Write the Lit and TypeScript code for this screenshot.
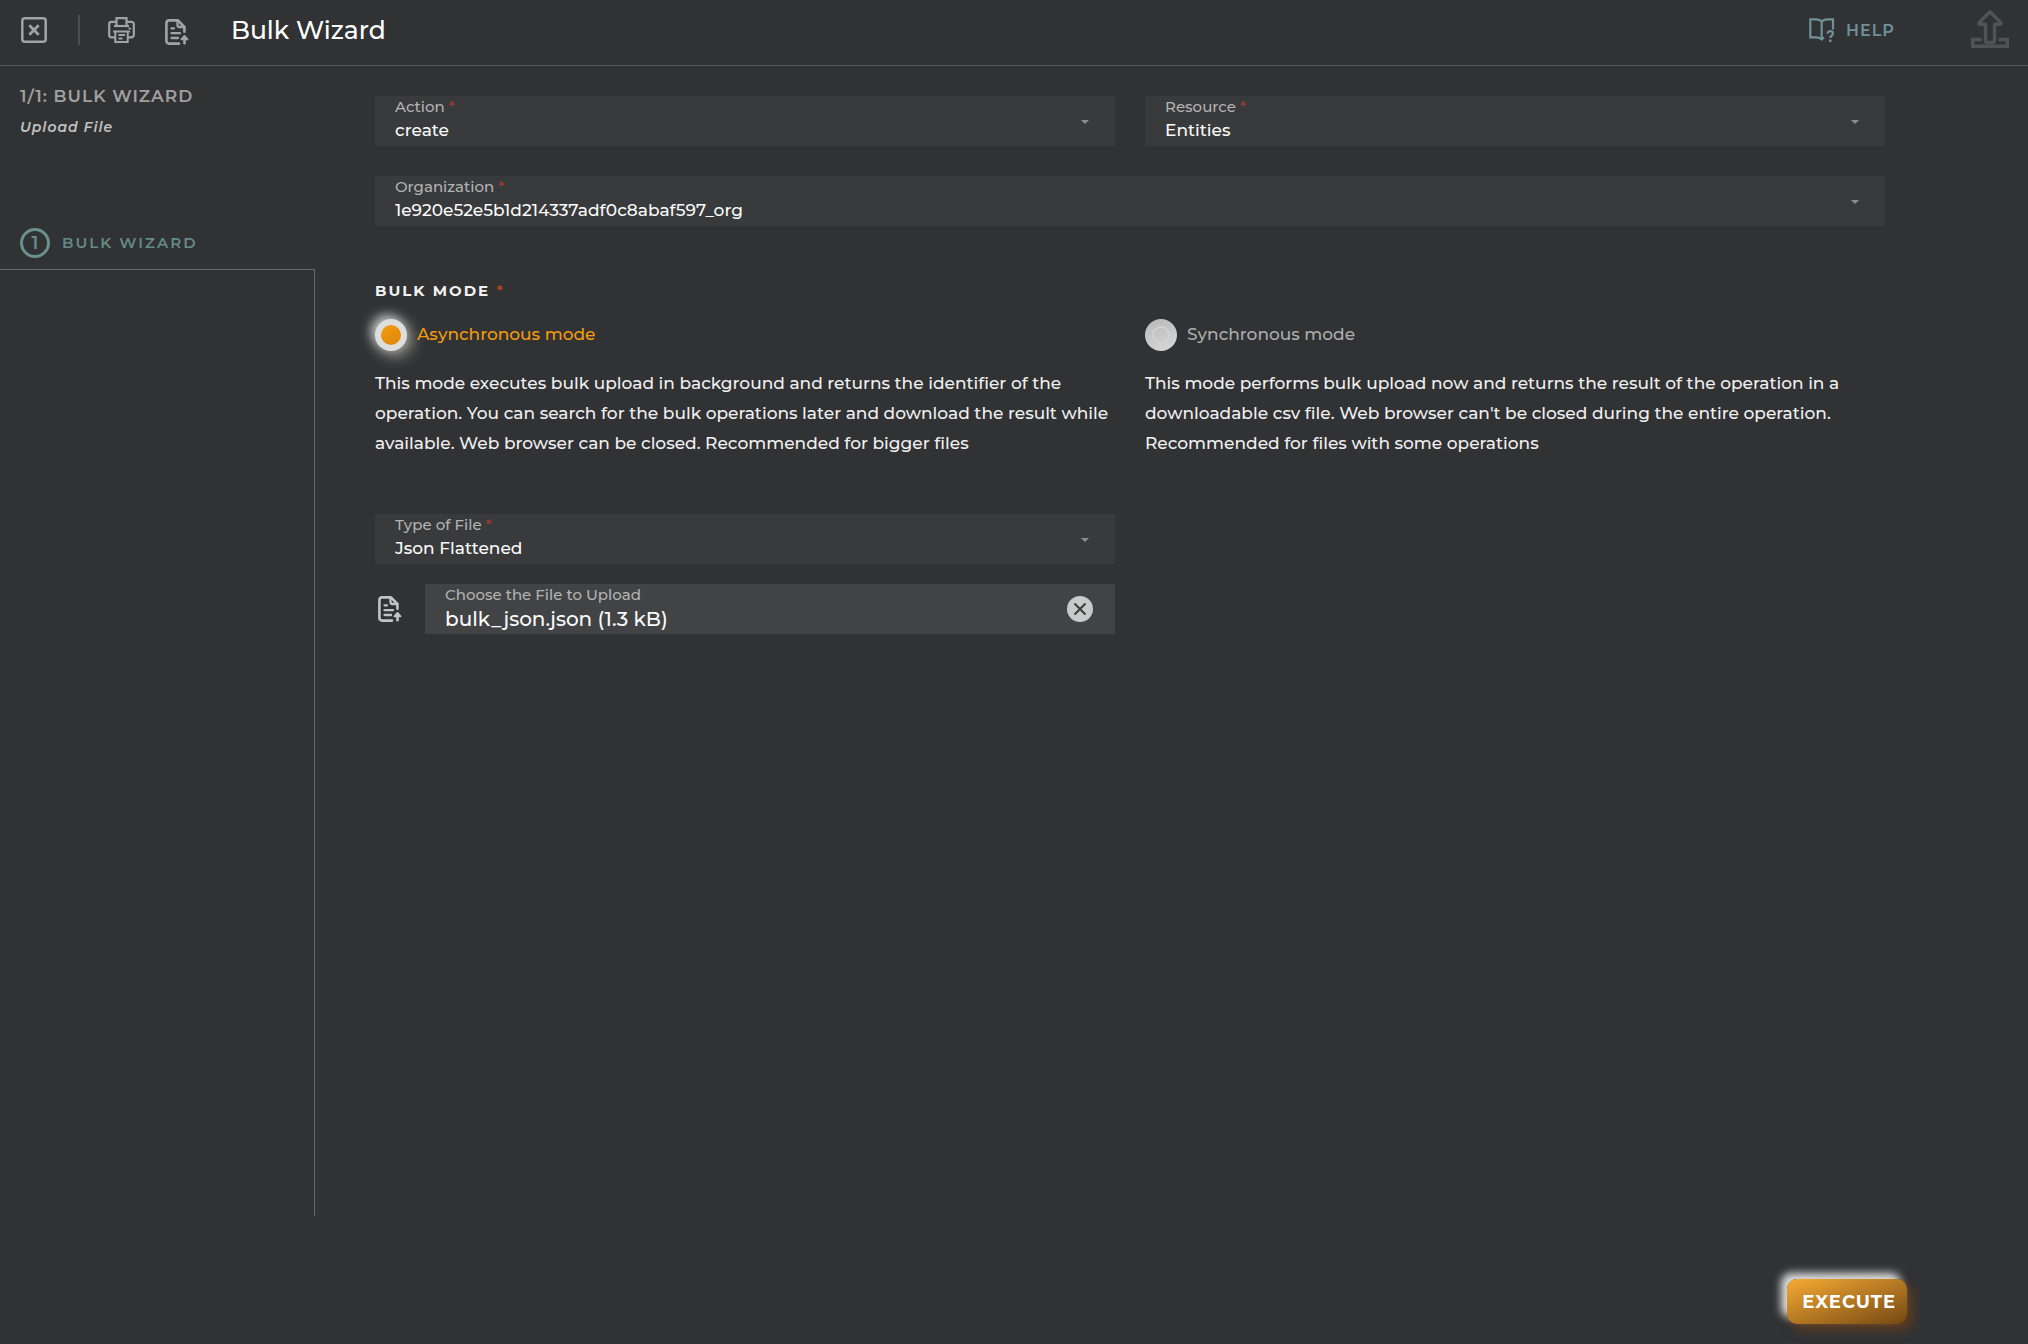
import { LitElement, html, css } from "lit";
import { customElement, property, state } from "lit/decorators.js";

const closeIcon = html`<svg width="26" height="26" viewBox="0 0 26 26" fill="none" stroke="currentColor" stroke-width="2.500" aria-hidden="true">
  <rect x="1.300" y="1.300" width="23.400" height="23.400" rx="2.500"></rect>
  <path d="M8.300 8.300l9.400 9.400M17.700 8.300l-9.400 9.400" stroke-width="2.700"></path>
</svg>`;

const printIcon = html`<svg width="28" height="26" viewBox="0 0 28 26" fill="none" stroke="currentColor" stroke-width="2.200" aria-hidden="true">
  <path d="M8.500 9V1.100h10V9"></path>
  <path d="M6 9h15"></path>
  <path d="M8.500 4.900H3.500a2.300 2.300 0 0 0-2.300 2.300V18a2.300 2.300 0 0 0 2.300 2.300h4M18.500 4.900h5a2.300 2.300 0 0 1 2.300 2.300V18a2.300 2.300 0 0 1-2.300 2.300h-4"></path>
  <path d="M5 14.500h17M7.300 14.500V24.900h12.400V14.500M10.500 18h6.500M10.500 21.500h4" stroke-width="2"></path>
  <path d="M20.500 11.500h2.500" stroke-width="1.800"></path>
</svg>`;

const fileUploadIcon = html`<svg width="24" height="26" viewBox="0 0 24 26" fill="none" stroke="currentColor" stroke-width="2.600" stroke-linecap="round" stroke-linejoin="round" aria-hidden="true">
  <path d="M14 24.600H4.200A2.800 2.800 0 0 1 1.400 22V4A2.800 2.800 0 0 1 4.200 1.400h8.800L19.400 8v4.800"></path>
  <path d="M12.500 1.800V6a2 2 0 0 0 2 2h4.800" stroke-width="2.300"></path>
  <path d="M6.500 9.300h2.500M6.500 14.200h8.500M6.500 19h6.500" stroke-width="2.300"></path>
  <path d="M19.500 24.300v-5"></path>
  <path d="M16.500 20.300l3-3.300 3 3.300z" fill="currentColor" stroke-width="1.900"></path>
</svg>`;

const helpIcon = html`<svg width="26" height="25" viewBox="0 0 26 25" fill="none" stroke="currentColor" stroke-width="2.200" aria-hidden="true">
  <path d="M12.700 21.500V3.600C11.500 2 9.500 1.400 7 1.400H1.300v18h6.200c2.300 0 3.700.6 5.200 2 .8-.8 1.500-1.300 2.500-1.600"></path>
  <path d="M12.700 3.600C14 2 16 1.400 18.500 1.400h5.500v10"></path>
  <path d="M18.600 15.700c.1-1.700 1.200-2.500 2.700-2.500s2.600.9 2.600 2.300c0 2.100-2.600 2.100-2.600 4.600" stroke-width="2.200"></path>
  <path d="M21.300 21.500v2.500" stroke-width="2.400"></path>
</svg>`;

const uploadIcon = html`<svg width="38" height="38" viewBox="0 0 38 38" fill="none" stroke="currentColor" stroke-width="3.400" stroke-linejoin="round" aria-hidden="true">
  <path d="M19 1.800L29.800 12.500q1 1.800-1 1.800H23.500V30.500q0 2-2 2H16.500q-2 0-2-2V14.300H9.200q-2 0-1-1.800z"></path>
  <path d="M10.500 29.500H1.700V36.300H36.300V29.500H27.500" stroke-linejoin="miter"></path>
</svg>`;

const clearIcon = html`<svg width="26" height="26" viewBox="0 0 26 26" aria-hidden="true">
  <circle cx="13" cy="13" r="13" fill="#c8caca"></circle>
  <path d="M7.500 7.500l11 11M18.500 7.500l-11 11" stroke="#3b3c3e" stroke-width="2"></path>
</svg>`;

@customElement("wizard-select")
class WizardSelect extends LitElement {
  @property() label = "";
  @property({ type: Array }) options: string[] = [];

  static styles = css`
    :host {
      display: block;
      min-width: 0;
    }
    .field {
      display: grid;
      height: 50px;
      background: #393a3c;
    }
    .label,
    .select,
    .caret {
      grid-area: 1 / 1;
    }
    .label {
      z-index: 1;
      align-self: start;
      justify-self: start;
      padding: 1px 20px;
      font-size: 15px;
      line-height: 20px;
      color: #b2b3b3;
      pointer-events: none;
    }
    .required {
      color: #b03a34;
      font-weight: 400;
    }
    .select {
      appearance: none;
      box-sizing: border-box;
      width: 100%;
      padding: 18px 50px 0 20px;
      border: 0;
      border-radius: 0;
      background: transparent;
      color: #fafafa;
      font: inherit;
      font-size: 17px;
    }
    .select:focus-visible {
      outline: 1px solid #6f9da0;
    }
    .option {
      background: #393a3c;
    }
    .caret {
      align-self: center;
      justify-self: end;
      margin: 2px 26px 0 0;
      pointer-events: none;
    }
  `;

  render() {
    return html`<div class="field">
      <label class="label" for="control">${this.label} <span class="required">*</span></label>
      <select class="select" id="control" required>
        ${this.options.map((o) => html`<option class="option">${o}</option>`)}
      </select>
      <svg class="caret" width="8" height="4" viewBox="0 0 8 4" aria-hidden="true">
        <path d="M0 0h8L4 4z" fill="#8c8d8d"></path>
      </svg>
    </div>`;
  }
}

interface Mode {
  id: string;
  name: string;
  text: string;
}

const modes: Mode[] = [
  {
    id: "async",
    name: "Asynchronous mode",
    text: "This mode executes bulk upload in background and returns the identifier of the operation. You can search for the bulk operations later and download the result while available. Web browser can be closed. Recommended for bigger files",
  },
  {
    id: "sync",
    name: "Synchronous mode",
    text: "This mode performs bulk upload now and returns the result of the operation in a downloadable csv file. Web browser can't be closed during the entire operation. Recommended for files with some operations",
  },
];

@customElement("app-root")
class AppRoot extends LitElement {
  @state() private mode = "async";
  @state() private file = "bulk_json.json (1.3 kB)";

  static styles = css`
    :host {
      display: flex;
      flex-direction: column;
      min-height: 100vh;
      background: #313234;
      color: #f0f0f0;
      font-family: Montserrat, Inter, "Open Sans", sans-serif;
      font-size: 16px;
      font-weight: 500;
    }
    svg {
      display: block;
    }
    .icon-button {
      display: block;
      padding: 0;
      border: 0;
      background: none;
      color: inherit;
      cursor: pointer;
    }
    .header {
      display: flex;
      align-items: center;
      box-sizing: border-box;
      height: 66px;
      padding: 0 19px 5px 21px;
      border-bottom: 1px solid #595a5c;
      color: #a3a3a3;
    }
    .divider {
      width: 2px;
      height: 30px;
      margin: 0 28px 0 31px;
      background: #4c4d4f;
    }
    .attach {
      margin: 4px 42px 0 29px;
    }
    .title {
      flex: 1;
      margin: 0;
      color: #ffffff;
      font-size: 25px;
      font-weight: 500;
      line-height: 32px;
    }
    .help {
      display: flex;
      align-items: center;
      gap: 11px;
      margin-right: 76px;
      color: #6f9298;
      font-size: 16px;
      font-weight: 600;
      letter-spacing: 1px;
      text-decoration: none;
    }
    .upload {
      margin-bottom: 2px;
      color: #515253;
    }
    .body {
      display: flex;
      flex: 1;
    }
    .sidebar {
      display: flex;
      flex-direction: column;
      flex: none;
      width: 315px;
    }
    .summary {
      box-sizing: border-box;
      height: 142px;
      padding: 20px 20px 0;
    }
    .position {
      margin: 0 0 11px;
      color: #a0a0a0;
      font-size: 17px;
      font-weight: 600;
      line-height: 20px;
      letter-spacing: 1px;
    }
    .stage {
      margin: 0;
      color: #c2c2c2;
      font-size: 14px;
      font-style: italic;
      font-weight: 600;
      line-height: 20px;
      letter-spacing: 1px;
    }
    .step {
      display: flex;
      align-items: center;
      gap: 12px;
      box-sizing: border-box;
      height: 61px;
      padding: 8px 20px 0;
      color: #648a89;
      font-size: 15px;
      font-weight: 600;
      letter-spacing: 2px;
      text-decoration: none;
    }
    .step-number {
      display: grid;
      place-items: center;
      box-sizing: border-box;
      width: 30px;
      height: 30px;
      border: 3px solid #6a908f;
      border-radius: 50%;
      font-size: 18px;
      letter-spacing: 0;
    }
    .rail {
      flex: 1;
      border: solid #666769;
      border-width: 1px 1px 0 0;
    }
    .form {
      display: grid;
      grid-template-columns: 1fr 1fr;
      align-content: start;
      gap: 30px;
      flex: 1;
      padding: 30px 143px 0 60px;
    }
    .wide {
      grid-column: 1 / -1;
    }
    .modes {
      display: grid;
      grid-template-columns: 1fr 1fr;
      column-gap: 30px;
      grid-column: 1 / -1;
      min-width: 0;
      margin: 24px 0 26px;
      padding: 0;
      border: 0;
    }
    .legend {
      margin-bottom: 18px;
      padding: 0;
      color: #f2f2f2;
      font-size: 15px;
      font-weight: 700;
      line-height: 21px;
      letter-spacing: 2px;
    }
    .required {
      color: #d2451e;
      font-weight: 500;
    }
    .choice {
      display: flex;
      align-items: center;
      gap: 10px;
      color: #adaeae;
      font-size: 17px;
      line-height: 30px;
    }
    .choice-name {
      height: 32px;
    }
    .choice.checked {
      color: #f39a11;
    }
    .radio {
      appearance: none;
      display: grid;
      place-items: center;
      flex: none;
      width: 32px;
      height: 32px;
      margin: 0;
      border-radius: 50%;
      background: linear-gradient(160deg, #b8b8b8, #d8d8d8);
    }
    .radio::before {
      content: "";
      box-sizing: border-box;
      width: 18px;
      height: 18px;
      border: 2px solid #d2d2d2;
      border-radius: 50%;
    }
    .radio:checked {
      background: #dedede;
      box-shadow:
        -4px -4px 12px rgba(255, 255, 255, 0.7),
        4px 4px 16px rgba(255, 255, 240, 0.6);
    }
    .radio:checked::before {
      width: 20px;
      height: 20px;
      border: 0;
      background: linear-gradient(150deg, #f59c12, #dc860a);
    }
    .note {
      margin: 17px 0 0;
      color: #f0f0f0;
      font-size: 17px;
      line-height: 30px;
    }
    .file {
      display: flex;
      flex-direction: column;
      gap: 20px;
      min-width: 0;
    }
    .file-row {
      display: flex;
      align-items: center;
    }
    .pick {
      margin: 0 23px 0 3px;
      color: #c2c3c3;
    }
    .file-field {
      display: flex;
      align-items: center;
      flex: 1;
      height: 50px;
      padding: 0 22px 0 20px;
      background: #424345;
    }
    .file-text {
      display: flex;
      flex-direction: column;
      flex: 1;
      height: 48px;
    }
    .file-label {
      color: #b2b3b3;
      font-size: 15px;
      line-height: 20px;
    }
    .file-name {
      padding: 0;
      border: 0;
      outline: 0;
      background: none;
      color: #fafafa;
      font: inherit;
      font-size: 20px;
      line-height: 28px;
    }
    .footer {
      display: flex;
      justify-content: flex-end;
      padding: 63px 121px 20px 0;
    }
    .execute {
      height: 45px;
      padding: 0 11px 0 15px;
      border: 0;
      border-radius: 10px;
      background: linear-gradient(160deg, #f7ab33, #744813);
      box-shadow:
        -6px -6px 8px rgba(255, 255, 255, 0.85),
        6px 6px 12px rgba(140, 70, 10, 0.5);
      color: #ffffff;
      font: inherit;
      font-size: 18px;
      font-weight: 700;
      letter-spacing: 1px;
      cursor: pointer;
    }
  `;

  private renderMode(m: Mode) {
    const checked = this.mode === m.id;
    return html`<div>
      <label class="choice ${checked ? "checked" : ""}">
        <input class="radio" type="radio" name="mode" .checked=${checked} @change=${() => (this.mode = m.id)} />
        <span class="choice-name">${m.name}</span>
      </label>
      <p class="note">${m.text}</p>
    </div>`;
  }

  render() {
    return html`
      <header class="header">
        <button class="icon-button" aria-label="Close">${closeIcon}</button>
        <span class="divider"></span>
        <button class="icon-button" aria-label="Print">${printIcon}</button>
        <button class="icon-button attach" aria-label="Load file">${fileUploadIcon}</button>
        <h1 class="title">Bulk Wizard</h1>
        <a class="help" href="#help">${helpIcon}<span>HELP</span></a>
        <span class="upload">${uploadIcon}</span>
      </header>
      <div class="body">
        <nav class="sidebar">
          <div class="summary">
            <h2 class="position">1/1: BULK WIZARD</h2>
            <p class="stage">Upload File</p>
          </div>
          <a class="step" href="#step-1"><span class="step-number">1</span>BULK WIZARD</a>
          <div class="rail"></div>
        </nav>
        <main class="form">
          <wizard-select label="Action" .options=${["create"]}></wizard-select>
          <wizard-select label="Resource" .options=${["Entities"]}></wizard-select>
          <wizard-select class="wide" label="Organization" .options=${["1e920e52e5b1d214337adf0c8abaf597_org"]}></wizard-select>
          <fieldset class="modes">
            <legend class="legend">BULK MODE <span class="required">*</span></legend>
            ${modes.map((m) => this.renderMode(m))}
          </fieldset>
          <div class="file">
            <wizard-select label="Type of File" .options=${["Json Flattened"]}></wizard-select>
            <div class="file-row">
              <button class="icon-button pick" aria-label="Choose file">${fileUploadIcon}</button>
              <div class="file-field">
                <div class="file-text">
                  <label class="file-label" for="file-name">Choose the File to Upload</label>
                  <input class="file-name" id="file-name" type="text" readonly .value=${this.file} />
                </div>
                <button class="icon-button" aria-label="Clear file" @click=${() => (this.file = "")}>${clearIcon}</button>
              </div>
            </div>
          </div>
        </main>
      </div>
      <footer class="footer">
        <button class="execute">EXECUTE</button>
      </footer>
    `;
  }
}
